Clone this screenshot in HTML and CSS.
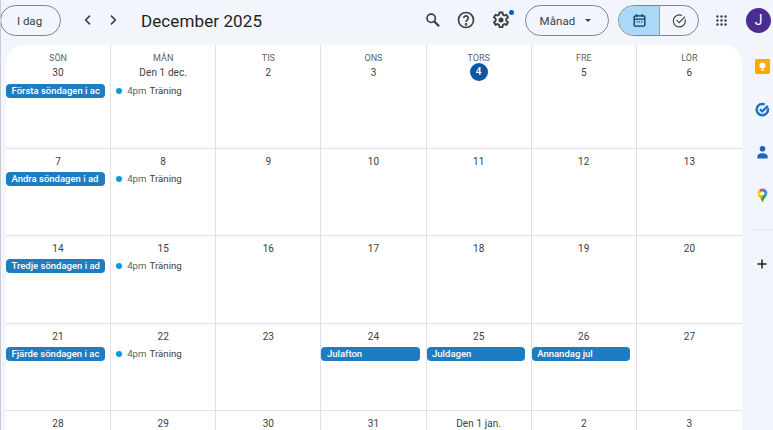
FILE: index.html
```html
<!DOCTYPE html>
<html lang="sv">
<head>
<meta charset="utf-8">
<title>Kalender</title>
<link rel="stylesheet" href="styles.css">
</head>
<body>
<div class="app">
  <header class="topbar">
    <button class="today">I dag</button>
    <div class="navs">
      <svg class="chev" viewBox="0 0 24 24"><path d="M15 5.500 8.500 12l6.500 6.500"/></svg>
      <svg class="chev" viewBox="0 0 24 24"><path d="M9 5.500 15.500 12 9 18.500"/></svg>
    </div>
    <h1 class="title">December 2025</h1>
    <div class="tools">
      <svg class="ico" viewBox="0 0 24 24"><circle cx="11" cy="10" r="5"/><path d="m14.500 13.500 6 6" class="thick"/></svg>
      <svg class="ico" viewBox="0 0 24 24"><circle cx="12" cy="12" r="9"/><path d="M9.300 9.700a2.700 2.700 0 1 1 4.400 2.100c-1 .8-1.700 1.300-1.700 2.700"/><circle cx="12" cy="17.300" r=".6"/></svg>
      <div class="gear">
        <svg class="ico ico-gear" viewBox="0 0 24 24"><path d="m10.200 3h3.600l.5 2.600 1.800 1 2.500-.9 1.800 3.100-2 1.700v2.500l2 1.700-1.800 3.100-2.500-.9-1.800 1-.5 2.600h-3.600l-.5-2.600-1.800-1-2.500.9-1.800-3.100 2-1.700v-2.500l-2-1.700 1.800-3.100 2.500.9 1.800-1z"/><circle cx="12" cy="12" r="3" class="filled"/></svg>
        <span class="gear-dot"></span>
      </div>
    </div>
    <button class="view">Månad<span class="caret"></span></button>
    <div class="toggle">
      <span class="seg seg-on">
        <svg class="seg-ico" viewBox="0 0 24 24"><rect x="4.500" y="5.500" width="15" height="14.500" rx="1.500"/><path d="M4.500 10h15M8 3v4M16 3v4M8 14h1.500M11.300 14h1.500M14.500 14h1.500"/></svg>
      </span>
      <span class="seg">
        <svg class="seg-ico grey" viewBox="0 0 24 24"><path d="M20 10.500A8.500 8.500 0 1 1 15.500 5"/><path d="m8 11.500 3.500 3.500 8.500-8.500"/></svg>
      </span>
    </div>
    <svg class="apps" viewBox="0 0 16 16"><g><circle cx="3" cy="3" r="1.500"/><circle cx="8" cy="3" r="1.500"/><circle cx="13" cy="3" r="1.500"/><circle cx="3" cy="8" r="1.500"/><circle cx="8" cy="8" r="1.500"/><circle cx="13" cy="8" r="1.500"/><circle cx="3" cy="13" r="1.500"/><circle cx="8" cy="13" r="1.500"/><circle cx="13" cy="13" r="1.500"/></g></svg>
    <div class="avatar">J</div>
  </header>
  <div class="main">
    <div class="cal">
      <div class="cell"><div class="dow">SÖN</div><div class="num">30</div><div class="ev">Första söndagen i ac</div></div>
      <div class="cell"><div class="dow">MÅN</div><div class="num">Den 1 dec.</div><div class="tev"><i></i><span class="t">4pm</span><span>Träning</span></div></div>
      <div class="cell"><div class="dow">TIS</div><div class="num">2</div></div>
      <div class="cell"><div class="dow">ONS</div><div class="num">3</div></div>
      <div class="cell"><div class="dow">TORS</div><div class="num num-today">4</div></div>
      <div class="cell"><div class="dow">FRE</div><div class="num">5</div></div>
      <div class="cell"><div class="dow">LÖR</div><div class="num">6</div></div>

      <div class="cell"><div class="num">7</div><div class="ev">Andra söndagen i ad</div></div>
      <div class="cell"><div class="num">8</div><div class="tev"><i></i><span class="t">4pm</span><span>Träning</span></div></div>
      <div class="cell"><div class="num">9</div></div>
      <div class="cell"><div class="num">10</div></div>
      <div class="cell"><div class="num">11</div></div>
      <div class="cell"><div class="num">12</div></div>
      <div class="cell"><div class="num">13</div></div>

      <div class="cell"><div class="num">14</div><div class="ev">Tredje söndagen i ad</div></div>
      <div class="cell"><div class="num">15</div><div class="tev"><i></i><span class="t">4pm</span><span>Träning</span></div></div>
      <div class="cell"><div class="num">16</div></div>
      <div class="cell"><div class="num">17</div></div>
      <div class="cell"><div class="num">18</div></div>
      <div class="cell"><div class="num">19</div></div>
      <div class="cell"><div class="num">20</div></div>

      <div class="cell"><div class="num">21</div><div class="ev">Fjärde söndagen i ac</div></div>
      <div class="cell"><div class="num">22</div><div class="tev"><i></i><span class="t">4pm</span><span>Träning</span></div></div>
      <div class="cell"><div class="num">23</div></div>
      <div class="cell"><div class="num">24</div><div class="ev">Julafton</div></div>
      <div class="cell"><div class="num">25</div><div class="ev">Juldagen</div></div>
      <div class="cell"><div class="num">26</div><div class="ev">Annandag jul</div></div>
      <div class="cell"><div class="num">27</div></div>

      <div class="cell"><div class="num">28</div></div>
      <div class="cell"><div class="num">29</div></div>
      <div class="cell"><div class="num">30</div></div>
      <div class="cell"><div class="num">31</div></div>
      <div class="cell"><div class="num">Den 1 jan.</div></div>
      <div class="cell"><div class="num">2</div></div>
      <div class="cell"><div class="num">3</div></div>
    </div>
    <aside class="rail">
      <svg class="rail-ico" viewBox="0 0 16 16"><rect width="16" height="16" rx="1.500" fill="#f9ab00"/><circle cx="8" cy="7" r="3.200" fill="#fff"/><rect x="6.500" y="10.800" width="3" height="1.500" fill="#fff"/></svg>
      <svg class="rail-ico" viewBox="0 0 16 16"><path d="M13.600 6.500A6 6 0 1 1 10.500 2.700" fill="none" stroke="#1a73c8" stroke-width="2.600"/><path d="m5.200 7.600 2.500 2.500 6-6" fill="none" stroke="#1a73c8" stroke-width="2.400"/></svg>
      <svg class="rail-ico" viewBox="0 0 16 16"><circle cx="8" cy="4" r="3" fill="#1a66b8"/><path d="M2.500 14.500v-2c0-2.400 2.800-3.600 5.500-3.600s5.500 1.200 5.500 3.600v2z" fill="#1a66b8"/></svg>
      <svg class="rail-ico" viewBox="0 0 16 16"><path d="M8 .5a5.200 5.200 0 0 1 5.200 5.200L8 8z" fill="#4285f4"/><path d="M4.200 2.100A5.200 5.200 0 0 1 8 .5v5.200z" fill="#ea4335"/><path d="M2.800 5.700c0-1.400.5-2.700 1.400-3.600L8 5.700z" fill="#fbbc04"/><path d="M2.800 5.700C2.800 8.800 6.200 10.500 8 15.500V8z" fill="#fbbc04"/><path d="M13.200 5.700C13.200 8.800 9.800 10.500 8 15.500 7.500 14.200 6.900 13.100 6.200 12.100L8 8z" fill="#34a853"/><circle cx="8" cy="5.700" r="1.900" fill="#fff"/></svg>
      <div class="rail-sep"></div>
      <svg class="rail-plus" viewBox="0 0 12 12"><path d="M6 .5v11M.5 6h11"/></svg>
    </aside>
  </div>
</div>
</body>
</html>
```

FILE: styles.css
```css
* { box-sizing: border-box; }
html, body { margin: 0; height: 100%; overflow: hidden; }
body {
  background: #f2f5fb;
  font-family: "Roboto", "Liberation Sans", sans-serif;
  color: #3c4043;
}
.app {
  width: 773px;
  height: 430px;
  display: flex;
  flex-direction: column;
  border-left: 1px solid #c9ccd1;
  overflow: hidden;
}
.topbar {
  height: 45px;
  flex: none;
  display: flex;
  align-items: flex-start;
}
.today {
  margin: 5px 0 0 -1px;
  width: 61px;
  height: 31px;
  border: 1px solid #80868b;
  border-radius: 16px;
  background: transparent;
  font: 400 11.500px "Roboto", sans-serif;
  color: #3c4043;
  padding: 0 2px 0 0;
}
.navs {
  display: flex;
  gap: 9px;
  margin: 11px 0 0 19px;
}
.chev { width: 16px; height: 18px; fill: none; stroke: #3c4043; stroke-width: 2.400; }
.title {
  margin: 9px 0 0 20px;
  font: 400 17px/24px "Roboto", sans-serif;
  color: #1f1f1f;
  letter-spacing: .1px;
  width: 150px;
  white-space: nowrap;
}
.tools {
  display: flex;
  gap: 14px;
  margin: 10px 0 0 131px;
}
.ico { width: 20px; height: 20px; fill: none; stroke: #3c4043; stroke-width: 2; display: block; }
.ico .thick { stroke-width: 2.800; }
.ico .filled { fill: #3c4043; stroke: none; }
.ico-gear { stroke-width: 2.200; margin-left: 1px; }
.gear { position: relative; }
.gear-dot {
  position: absolute;
  right: -3px;
  top: 0;
  width: 5px;
  height: 5px;
  border-radius: 50%;
  background: #0b57d0;
}
.view {
  margin: 5px 0 0 14px;
  width: 84px;
  height: 31px;
  border: 1px solid #80868b;
  border-radius: 16px;
  background: transparent;
  font: 400 11.500px "Roboto", sans-serif;
  letter-spacing: .1px;
  color: #3c4043;
  padding: 0 3px 0 0;
  display: flex;
  align-items: center;
  justify-content: center;
  gap: 10px;
}
.caret {
  width: 0;
  height: 0;
  border-left: 3px solid transparent;
  border-right: 3px solid transparent;
  border-top: 3px solid #3c4043;
}
.toggle {
  margin: 5px 0 0 9px;
  width: 81px;
  height: 31px;
  border: 1px solid #80868b;
  border-radius: 16px;
  display: flex;
  overflow: hidden;
}
.seg { flex: 1; display: flex; align-items: center; justify-content: center; }
.seg-on { background: #a8daf7; flex: none; width: 41px; border-right: 1px solid #9aa0a6; }
.seg-ico { width: 17px; height: 17px; fill: none; stroke: #0c3a5e; stroke-width: 1.900; }
.seg-ico.grey { stroke: #444746; stroke-width: 1.700; }
.apps { width: 13px; height: 13px; margin: 14px 0 0 16px; fill: #3c4043; flex: none; }
.avatar {
  margin: 8px 0 0 18px;
  width: 25px;
  height: 25px;
  flex: none;
  border-radius: 50%;
  background: #4d2c91;
  color: #fff;
  font: 400 14px/25px "Roboto", sans-serif;
  text-align: center;
}
.main { flex: 1; display: flex; min-height: 0; overflow: hidden; }
.cal {
  margin-left: 5px;
  width: 736px;
  flex: none;
  height: 385px;
  background: #fff;
  border-radius: 18px 18px 0 0;
  display: grid;
  grid-template-columns: repeat(7, 1fr);
  grid-template-rows: 103.500px 87.500px 87.500px 87.500px 19px;
  overflow: hidden;
}
.cell {
  border-right: 1px solid #dde2ea;
  border-bottom: 1px solid #dde2ea;
  padding-top: 6px;
  min-width: 0;
  overflow: hidden;
}
.cell:nth-child(7n) { border-right: 0; }
.cell:nth-child(n+29) { border-bottom: 0; }
.dow {
  text-align: center;
  font: 400 9px/14px "Roboto", sans-serif;
  color: #5f6368;
  height: 14px;
}
.num {
  text-align: center;
  font: 400 10px/14px "Roboto", sans-serif;
  letter-spacing: .1px;
  color: #3c4043;
  height: 14px;
}
.dow + .num { margin-top: 1px; }
.dow + .num-today {
  width: 18px;
  height: 18px;
  line-height: 18px;
  margin: -2px auto 0;
  border-radius: 50%;
  background: #0b57a4;
  color: #fff;
  font-weight: 500;
}
.ev {
  margin: 3px 5.500px 0 0;
  height: 14px;
  border-radius: 4px;
  background: #1d7cc2;
  color: #fff;
  font: 500 9.500px/14px "Roboto", sans-serif;
  padding: 0 0 0 5.500px;
  white-space: nowrap;
  overflow: hidden;
}
.tev {
  margin: 3px 0 0 0;
  height: 14px;
  display: flex;
  align-items: center;
  font: 400 9.700px/14px "Roboto", sans-serif;
  color: #3c4043;
  padding-left: 5px;
  white-space: nowrap;
}
.dow ~ .ev, .dow ~ .tev { margin-top: 4px; }
.tev i {
  width: 6px;
  height: 6px;
  border-radius: 50%;
  background: #039be5;
  margin-right: 5px;
}
.tev .t { margin-right: 3px; color: #5f6368; }
.rail {
  flex: 1;
  display: flex;
  flex-direction: column;
  align-items: center;
  padding: 14px 0 0 9px;
}
.rail-ico { width: 15px; height: 15px; margin-bottom: 28px; flex: none; }
.rail-sep { width: 22px; height: 1px; background: #e6e9ef; margin: -2px 0 0; flex: none; }
.rail-plus { width: 10px; height: 10px; margin-top: 29px; fill: none; stroke: #1f1f1f; stroke-width: 1.800; flex: none; }
```
